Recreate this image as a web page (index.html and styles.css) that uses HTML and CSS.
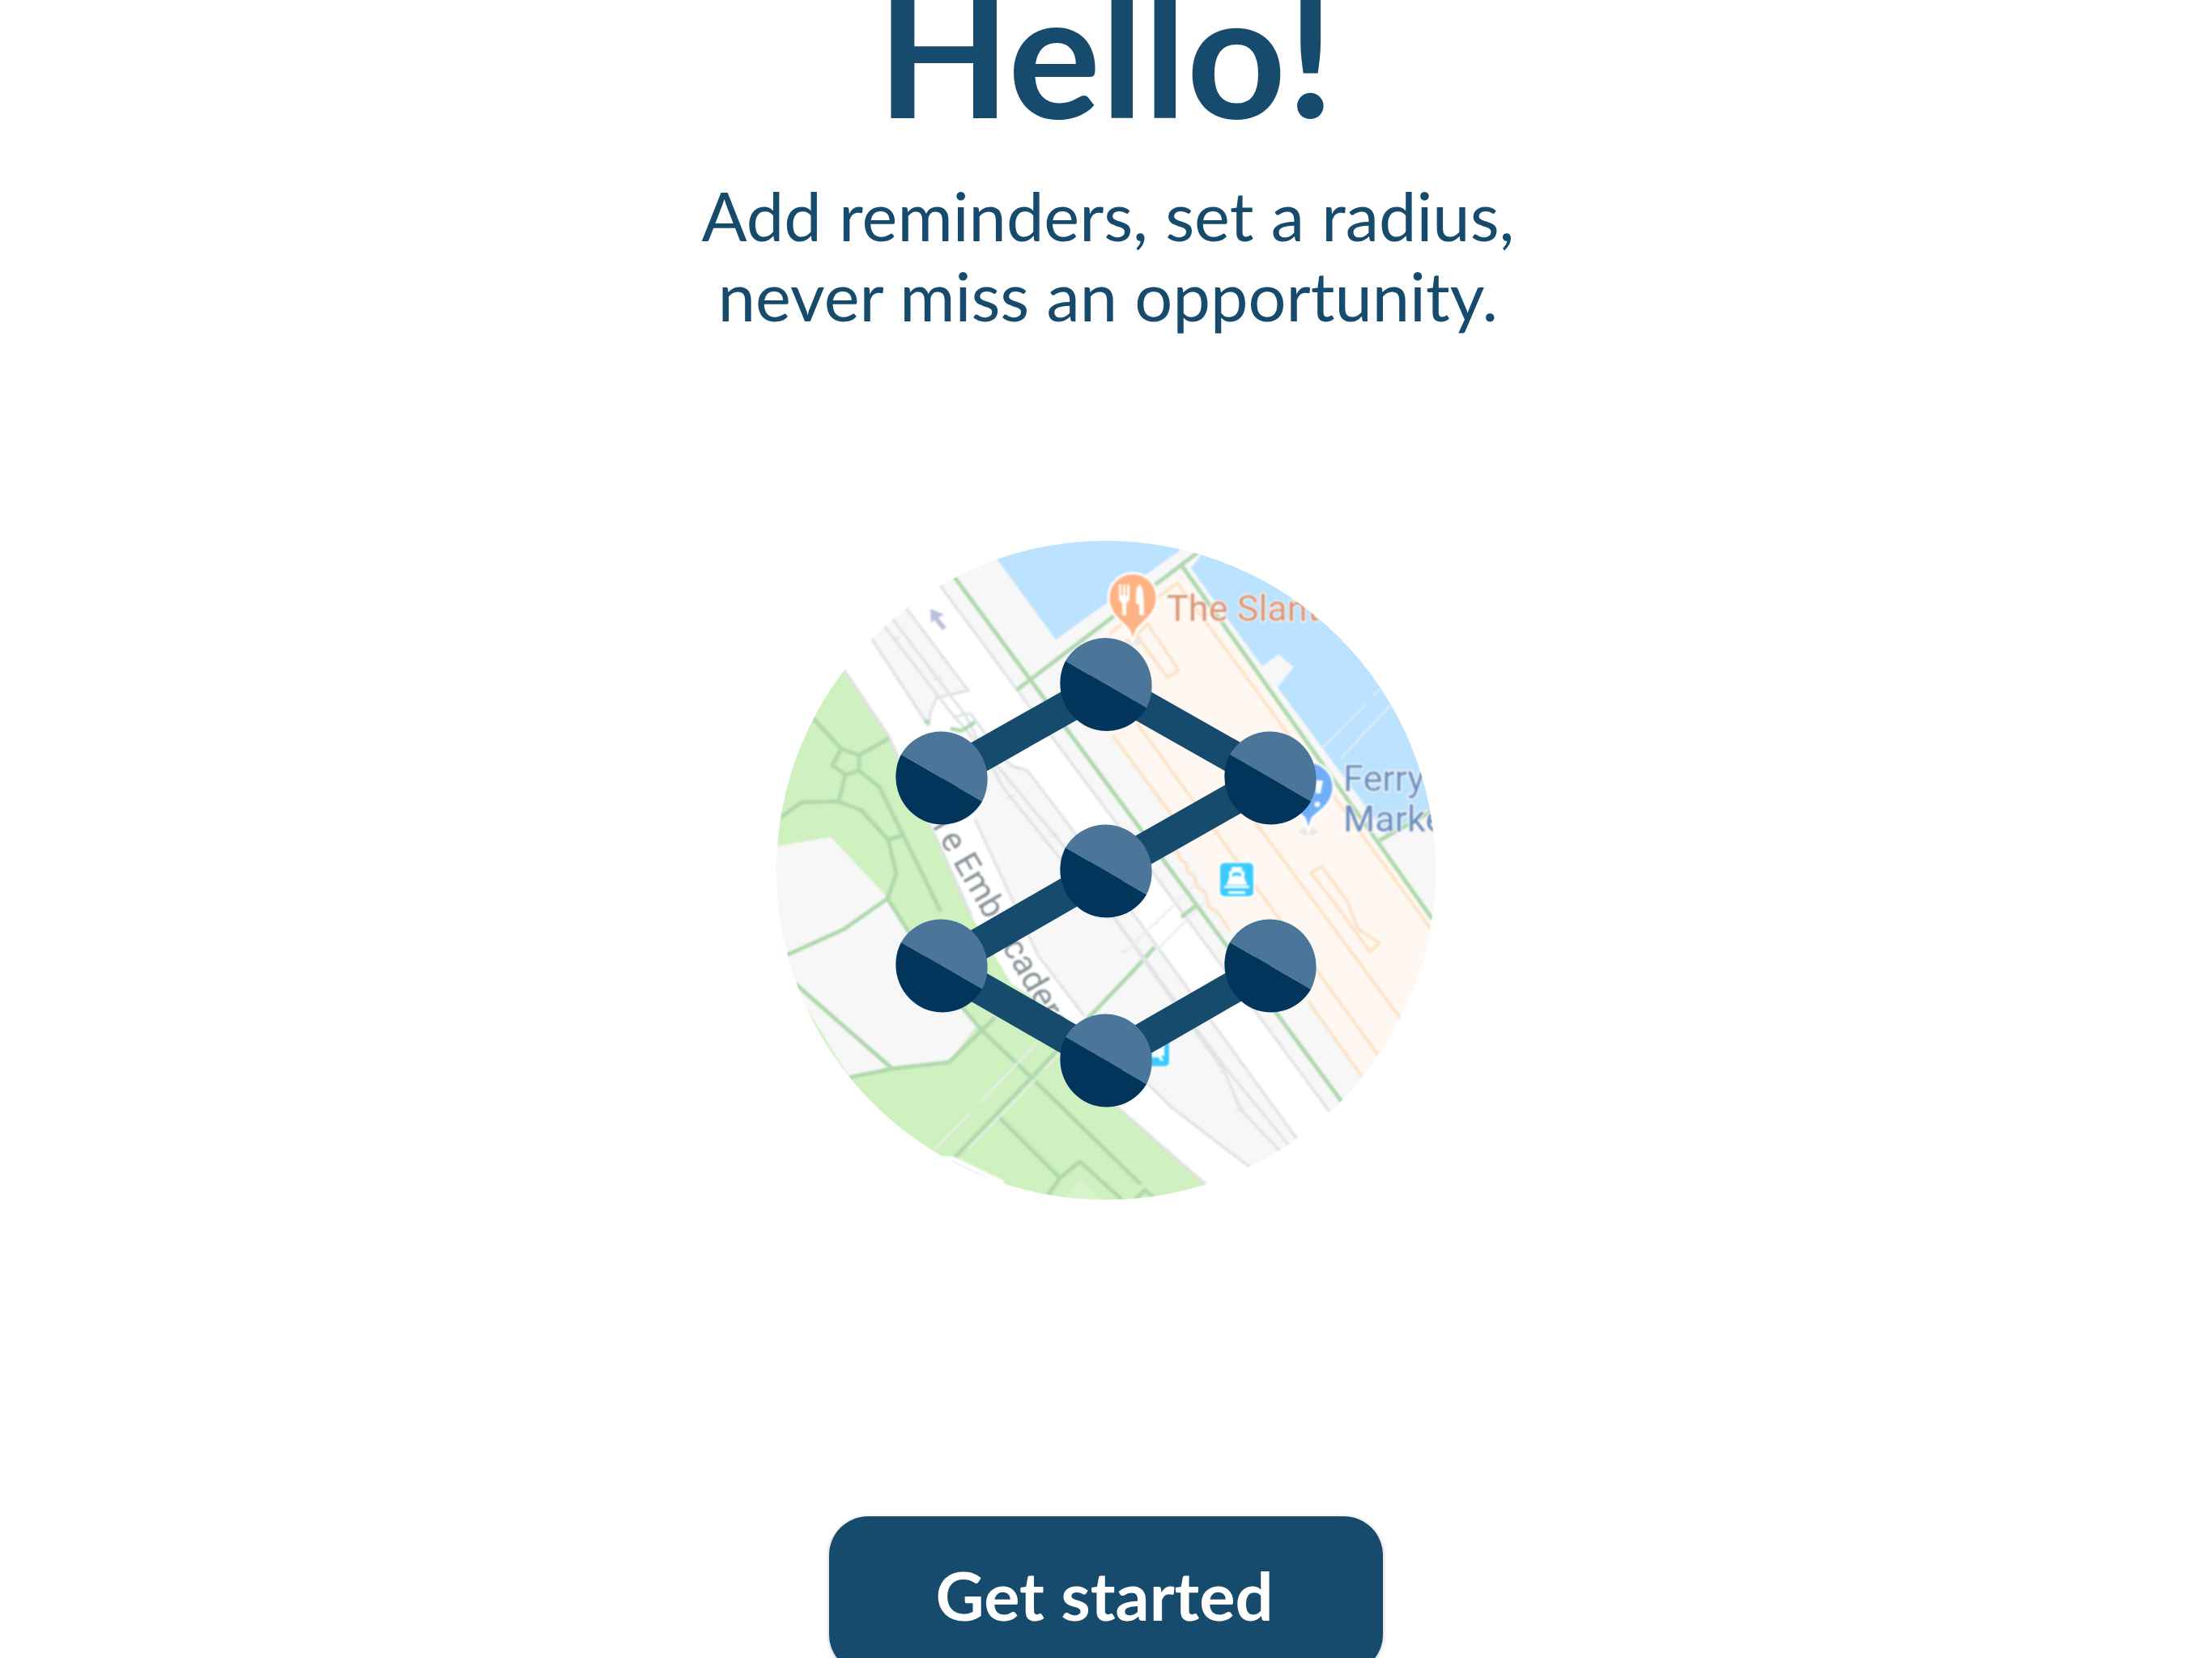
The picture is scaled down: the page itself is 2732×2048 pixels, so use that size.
FILE: index.html

```html
<!DOCTYPE html>
<html lang="en">
<head>
  <meta charset="UTF-8">
  <title>Hello!</title>
  <link rel="stylesheet" href="styles.css">
</head>
<body>

<main class="intro">
  <h1 class="title">Hello!</h1>
  <p class="subtitle">Add reminders, set a radius,<br>never miss an opportunity.</p>

  <svg class="map" viewBox="960 667 814 816" width="814" height="816">
    <defs>
      <clipPath id="map-clip"><circle cx="1367" cy="1075" r="407"/></clipPath>
      <g id="node">
        <path class="node-light" d="M-50.100 -28.900A57.500 59 0 0 1 50.100 28.900Z"/>
        <path class="node-dark" d="M50.100 28.900A57.500 59 0 0 1 -50.100 -28.900Z"/>
      </g>
    </defs>

    <g clip-path="url(#map-clip)">
      <g class="map-base">
        <!-- land blocks -->
        <polygon class="land" points="1162,723 1150,650 1800,650 1800,1500 1700,1449"/>
        <polygon class="land" points="1077,788 1120,751 1197,853 1158,862 1150,880 1148,897"/>
        <polygon class="land" points="1195,905 1240,937 1253,947 1270,952 1327,1027 1603,1407 1640,1430 1620,1500 1545,1442 1447,1367 1417,1337 1340,1255 1283,1180 1240,1087 1205,1012 1170,950"/>

        <!-- water -->
        <polygon class="water" points="1232,690 1305,790 1458,680 1458,650 1220,650"/>
        <polygon class="water" points="1472,702 1485,685 1485,660 1777,660 1777,993 1713,1030 1579,849 1599,824 1580,808 1560,823"/>
        <polyline class="water-line" points="1635,923 1687,870"/>
        <polyline class="water-line" points="1657,937 1718,871"/>
        <polyline class="water-line" points="1698,858 1705,852"/>

        <!-- market block -->
        <polygon class="block" points="1310,820 1460,705 1790,1160 1790,1350 1690,1340 1617,1237 1520,1150 1447,1005 1375,908"/>
        <polyline class="outline" points="1375,908 1447,1005 1450,1050 1456,1052 1458,1062 1466,1066 1468,1078 1476,1082 1480,1096 1490,1102 1494,1120 1506,1128 1520,1150"/>
        <polyline class="outline" points="1617,1237 1683,1330"/>
        <polyline class="outline" points="1405,893 1703,1303"/>
        <polyline class="outline" points="1372,782 1455,720 1768,1147"/>
        <polyline class="outline" points="1540,1000 1730,1257"/>
        <polygon class="outline" points="1418,770 1457,828 1443,837 1405,785"/>
        <polygon class="outline" points="1620,1078 1633,1070 1665,1113 1678,1147 1705,1165 1693,1176 1673,1148 1658,1127"/>

        <!-- park -->
        <polygon class="park" points="1043,827 1097,907 1150,1019 1200,1130 1250,1215 1317,1257 1380,1367 1490,1463 1500,1500 950,1500 950,900"/>
        <polygon class="land" points="950,1047 1027,1034 1097,1108 1163,1213 1207,1268 1173,1311 1103,1320 1050,1331 995,1242 950,1240"/>
        <polygon class="park-light" points="1335,1457 1363,1485 1310,1485"/>
        <polyline class="edge" points="1043,827 1097,907 1150,1019 1200,1130"/>
        <polyline class="edge" points="1380,1367 1490,1463"/>

        <polyline class="path" points="1005,887 1040,925"/>
        <polygon class="path" points="1040,925 1062,933 1062,952 1045,957 1029,945"/>
        <polyline class="path" points="1062,933 1099,912"/>
        <polyline class="path" points="1062,952 1087,972 1163,1126"/>
        <polyline class="path" points="1045,957 1037,990"/>
        <polyline class="path" points="965,1010 991,991 1037,990 1065,1001 1098,1037 1108,1079 1097,1110 1043,1148 972,1180"/>
        <polyline class="path" points="1098,1037 1115,1032"/>
        <polyline class="path" points="1097,1110 1163,1213 1213,1272 1277,1333 1410,1463"/>
        <polyline class="path" points="983,1215 1103,1320"/>
        <polyline class="path" points="1050,1331 1103,1320 1173,1312 1230,1257"/>
        <polyline class="path" points="1180,1430 1273,1333 1400,1200 1427,1170"/>
        <polyline class="path" points="1235,1380 1310,1455"/>
        <polyline class="path" points="1295,1477 1310,1455 1335,1435 1387,1482"/>
        <polyline class="path" points="1403,1482 1415,1470 1428,1482"/>

        <polyline class="park-road" points="1210,1363 1283,1287"/>
        <polyline class="park-road" points="1153,1422 1199,1375"/>
        <polyline class="park-road" points="1198,1418 1280,1333"/>
        <polyline class="park-road" points="1290,1322 1310,1300"/>
        <polygon class="cut" points="1165,1428 1180,1429 1240,1458 1245,1475 1160,1475"/>
        <polyline class="rail" points="1175,1435 1217,1455"/>

        <!-- rails and kerbs -->
        <polyline class="rail" points="1162,723 1257,852 1377,1013 1643,1373"/>
        <polyline class="rail" points="1077,788 1148,897"/>
        <polyline class="rail" points="1120,751 1197,853 1158,862 1150,880 1148,897"/>
        <polyline class="rail" points="1093,773 1173,877 1230,943 1313,1043 1360,1110 1443,1227 1513,1323 1533,1370 1583,1423"/>
        <polyline class="rail" points="1103,764 1193,883 1240,973 1310,1060 1380,1137 1443,1223 1513,1317 1593,1415"/>
        <polyline class="rail" points="1240,937 1253,947 1270,952 1327,1027 1603,1407"/>
        <polyline class="rail" points="1178,887 1192,882 1200,882 1240,937"/>
        <polyline class="rail" points="1205,1012 1240,1087 1283,1180 1340,1255"/>
        <polyline class="rail" points="1417,1337 1447,1367 1545,1442"/>
        <polyline class="tick" points="1102,791 1112,787"/>
        <polyline class="tick" points="1154,840 1164,836"/>
        <polyline class="tick" points="1244,987 1254,982"/>
        <polyline class="tick" points="1297,1034 1306,1029"/>
        <polyline class="tick" points="1386,1177 1396,1172"/>
        <polyline class="tick" points="1508,1325 1518,1320"/>
        <polyline class="tick" points="1528,1372 1538,1367"/>

        <polyline class="pale" points="1390,1177 1477,1093"/>
        <polyline class="pale" points="1430,1173 1490,1113"/>

        <!-- green walkways -->
        <polyline class="path" points="1180,713 1665,1370"/>
        <polyline class="path" points="1257,852 1490,675"/>
        <polyline class="path" points="1460,698 1770,1135"/>
        <polyline class="path" points="1705,1038 1773,1000"/>
        <polyline class="path" points="1460,1133 1480,1117"/>
        <polyline class="path" points="1143,890 1149,893"/>
        <polyline class="path" points="1175,900 1190,903"/>
        <polyline class="path" points="1190,902 1205,892"/>

        <!-- labels -->
        <polygon class="arrow" points="1150,752 1167,759 1160,763 1170,775 1165,778 1155,766 1151,769"/>
        <text class="road-label" transform="translate(1133 987) rotate(60)"><tspan>Th</tspan><tspan dx="8">e Embarcadero</tspan></text>

        <ellipse class="pin-shadow" cx="1400" cy="793" rx="11" ry="5"/>
        <path class="pin-food" d="M1400 793L1396 780C1392 770 1370 762 1370 738A30 30 0 0 1 1430 738C1430 762 1408 770 1404 780Z"/>
        <path class="glyph" d="M1383 722h3v14h2v-14h3v14h2v-14h3v17c0 3-2 5-4 6v15h-5v-15c-2-1-4-3-4-6ZM1408 722c4 1 6 9 6 38h-6v-14h-4v-13c0-4 1-8 4-11Z"/>
        <text class="poi-food" x="1442" y="767">The Slanted Door</text>

        <ellipse class="pin-shadow" cx="1617" cy="1027" rx="11" ry="5"/>
        <path class="pin-shop" d="M1617 1027L1613 1012C1608 1004 1586 996 1586 972A31 31 0 0 1 1648 972C1648 996 1626 1004 1621 1012Z"/>
        <path class="glyph" d="M1626 964h9l-3 16h-6ZM1628 990a3.500 3.500 0 1 0 .1 0Z"/>
        <text class="poi-shop" x="1660" y="977">Ferry Building</text>
        <text class="poi-shop" x="1660" y="1027">Marketplace</text>

        <rect class="badge" x="1507" y="1065" width="43" height="43" rx="6"/>
        <path class="glyph" d="M1522 1071h13v5h3v9l3 7v1h-25v-1l3-7v-9h3ZM1523 1079v4c4-2 7-2 11 0v-4c-4-2-7-2-11 0ZM1513 1094h31v3h-31ZM1518 1101h21v3h-21Z"/>

        <rect class="badge" x="1403" y="1275" width="43" height="43" rx="6"/>
        <path class="glyph" d="M1424 1282h15v22h-4l3 6h-4l-2-4h-8ZM1430 1287v8h5v-8Z"/>
      </g>

      <!-- network logo -->
      <polyline class="links" points="1164,961 1367,846 1570,961 1367,1076 1164,1193 1367,1310 1570,1193"/>
      <use href="#node" x="1367" y="845.500"/>
      <use href="#node" x="1164" y="961"/>
      <use href="#node" x="1570" y="961"/>
      <use href="#node" x="1367" y="1076"/>
      <use href="#node" x="1164" y="1193"/>
      <use href="#node" x="1570" y="1193"/>
      <use href="#node" x="1367" y="1310"/>
    </g>
  </svg>

  <button class="start">Get started</button>
</main>

</body>
</html>
```

FILE: styles.css

```css
body {
  margin: 0;
  height: 2048px;
  overflow: hidden;
  background-color: #fff;
  font-family: "Lato", sans-serif;
  color: #174b6e;
}
.intro {
  display: flex;
  flex-direction: column;
  align-items: center;
}
.title {
  margin: -43px 0 0;
  font-size: 214px;
  line-height: 1;
  font-weight: 700;
}
.subtitle {
  margin: 46px 0 0;
  padding-left: 5px;
  font-size: 83px;
  line-height: 99px;
  text-align: center;
}
.map {
  display: block;
  margin-top: 252px;
  flex: none;
}
.start {
  flex: none;
  width: 684px;
  height: 194px;
  margin-top: 390px;
  padding: 0 4px 0 0;
  border: none;
  border-radius: 48px;
  background-color: #174b6e;
  box-shadow: 0 1px 5px rgba(0, 0, 0, 0.25);
  color: #fff;
  font-family: "Lato", sans-serif;
  font-size: 83px;
  font-weight: 700;
}

/* map looks like a scaled up bitmap */
.map-base { filter: blur(0.8px); }

/* map fills */
.land { fill: #f7f7f8; }
.water { fill: #bbe2fe; }
.block { fill: #fff8f2; }
.park { fill: #cff0bf; }
.park-light { fill: #d8f4cb; }
.cut { fill: #fff; }

/* map lines */
.water-line, .outline, .edge, .path, .park-road, .rail, .tick, .pale {
  fill: none;
  stroke-linejoin: round;
}
.water-line { stroke: #d9ecf8; stroke-width: 3; }
.outline { stroke: #fde3c8; stroke-width: 4; }
.edge { stroke: #dfe3de; stroke-width: 4; }
.path { stroke: #b0d9ae; stroke-width: 5; }
.park-road { stroke: #e6eee6; stroke-width: 3; }
.rail { stroke: #e2e3e6; stroke-width: 3.500; }
.tick { stroke: #e2e3e6; stroke-width: 2; }
.pale { stroke: #e9eff6; stroke-width: 3; }

/* map labels */
.road-label, .poi-food, .poi-shop {
  font-family: "Roboto", sans-serif;
  paint-order: stroke;
  stroke: #fff;
  stroke-width: 3px;
}
.road-label { font-size: 42px; fill: #8a9296; }
.poi-food { font-size: 45px; fill: #d9967a; stroke: #fff8f2; }
.poi-shop { font-size: 45px; fill: #6a90c4; stroke: #fff8f2; }
.arrow { fill: #bbc0da; }
.pin-shadow { fill: #ece8e2; }
.pin-food { fill: #ffb283; stroke: #fff; stroke-width: 3; }
.pin-shop { fill: #70aef8; stroke: #fff; stroke-width: 3; }
.badge { fill: #3dcbff; stroke: #fff; stroke-width: 2; }
.glyph { fill: #fff; fill-rule: evenodd; }

/* logo */
.links {
  fill: none;
  stroke: #174b6e;
  stroke-width: 40;
}
.node-light { fill: #4c7699; }
.node-dark { fill: #01355c; }
```
